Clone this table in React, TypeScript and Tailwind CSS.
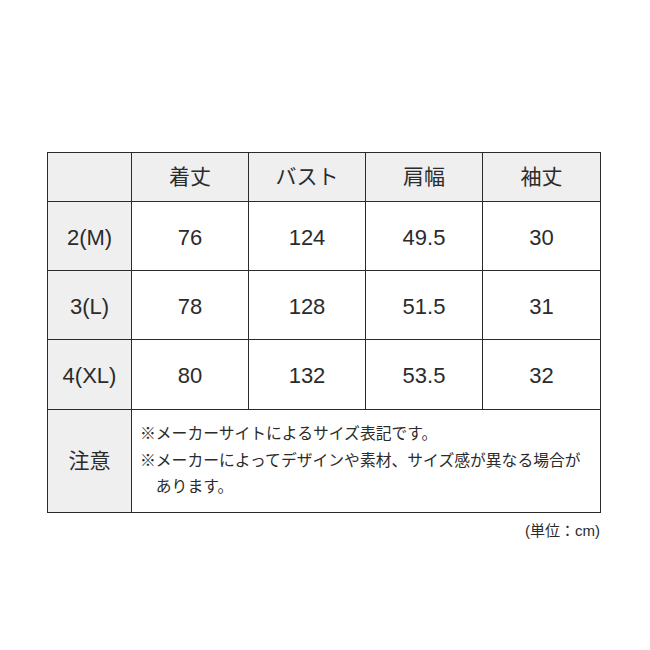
const headers = ["着丈", "バスト", "肩幅", "袖丈"];

const rows = [
  { size: "2(M)", values: ["76", "124", "49.5", "30"] },
  { size: "3(L)", values: ["78", "128", "51.5", "31"] },
  { size: "4(XL)", values: ["80", "132", "53.5", "32"] },
];

export default function App() {
  return (
    <div
      className="min-h-screen bg-white pt-[152px] pl-[47px] text-[#2b2b2b]"
      style={{ fontFamily: '"Liberation Sans", "Noto Sans CJK JP", sans-serif' }}
    >
      <table className="border-collapse table-fixed w-[553px]">
        <colgroup>
          <col className="w-[84px]" />
          <col className="w-[117px]" />
          <col className="w-[117px]" />
          <col className="w-[117px]" />
          <col className="w-[118px]" />
        </colgroup>
        <thead>
          <tr className="h-[49px] bg-[#efefef]">
            <th className="border border-[#2b2b2b] p-0"></th>
            {headers.map((h) => (
              <th key={h} className="border border-[#2b2b2b] p-0 text-[21px] font-normal text-center">
                {h}
              </th>
            ))}
          </tr>
        </thead>
        <tbody>
          {rows.map((r, i) => (
            <tr key={r.size} className={i === 2 ? "h-[70px]" : "h-[69px]"}>
              <td className="border border-[#2b2b2b] bg-[#efefef] px-0 pb-0 pt-[2px] text-center text-[22px]">
                {r.size}
              </td>
              {r.values.map((v, j) => (
                <td key={j} className="border border-[#2b2b2b] px-0 pb-0 pt-[2px] text-center text-[22px]">
                  {v}
                </td>
              ))}
            </tr>
          ))}
          <tr className="h-[103px]">
            <td className="border border-[#2b2b2b] bg-[#efefef] p-0 text-center text-[21px]">注意</td>
            <td colSpan={4} className="border border-[#2b2b2b] py-0 pl-[8px] pr-2 text-[15.8px] leading-[26.5px]">
              <p>※メーカーサイトによるサイズ表記です。</p>
              <p className="pl-[1em] -indent-[1em]">
                ※メーカーによってデザインや素材、サイズ感が異なる場合があります。
              </p>
            </td>
          </tr>
        </tbody>
      </table>
      <div className="w-[553px] text-right text-[15px] mt-[7px]">(単位：cm)</div>
    </div>
  );
}
